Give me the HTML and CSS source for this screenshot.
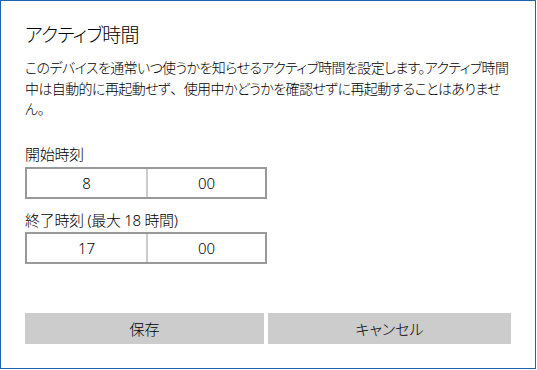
FILE: index.html
```html
<!DOCTYPE html>
<html lang="ja">
<head>
<meta charset="utf-8">
<link rel="stylesheet" href="styles.css">
</head>
<body>
<div class="window">
  <h1 class="title">アクティブ時間</h1>
  <p class="desc">このデバイスを通常いつ使うかを知らせるアクティブ時間を設定します。アクティブ時間<br>中は自動的に再起動せず<span class="punct">、</span>使用中かどうかを確認せずに再起動することはありませ<br>ん。</p>
  <div class="field">
    <div class="label">開始時刻</div>
    <div class="timebox">
      <div class="cell">8</div>
      <div class="cell">00</div>
    </div>
  </div>
  <div class="field">
    <div class="label">終了時刻 (最大 18 時間)</div>
    <div class="timebox">
      <div class="cell">17</div>
      <div class="cell">00</div>
    </div>
  </div>
  <div class="actions">
    <button class="btn">保存</button>
    <button class="btn">キャンセル</button>
  </div>
</div>
</body>
</html>
```

FILE: styles.css
```css
html, body {
  margin: 0;
  padding: 0;
  background: #ffffff;
}
body {
  font-family: "Noto Sans", "Noto Sans CJK JP", sans-serif;
  color: #000;
  font-feature-settings: "palt";
  font-weight: 300;
}
.window {
  box-sizing: border-box;
  width: 536px;
  height: 369px;
  border: 1px solid #1f62ad;
  padding: 19px 24px 0 24px;
  display: flex;
  flex-direction: column;
}
.title {
  margin: 0;
  font-size: 19px;
  letter-spacing: -0.8px;
  font-weight: 300;
  line-height: 30px;
}
.desc {
  margin: 8px 0 0 0;
  font-size: 14px;
  letter-spacing: -0.6px;
  line-height: 20.5px;
  white-space: nowrap;
}
.punct {
  font-feature-settings: normal;
}
.field {
  margin-top: 24px;
  display: flex;
  flex-direction: column;
  gap: 3px;
}
.field + .field {
  margin-top: 11px;
  gap: 2px;
}
.label {
  font-size: 15px;
  line-height: 20px;
  letter-spacing: -0.3px;
}
.timebox {
  box-sizing: border-box;
  width: 242px;
  height: 32px;
  border: 2px solid #999999;
  display: grid;
  grid-template-columns: 1fr 1fr;
}
.cell {
  display: flex;
  align-items: center;
  justify-content: center;
  font-size: 15px;
}
.cell + .cell {
  border-left: 2px solid #cccccc;
}
.actions {
  margin-top: 49px;
  display: grid;
  grid-template-columns: 239px 1fr;
  gap: 4px;
}
.btn {
  height: 31px;
  border: none;
  background: #cccccc;
  font-family: "Noto Sans", "Noto Sans CJK JP", sans-serif;
  font-feature-settings: "palt";
  font-weight: 300;
  font-size: 15px;
  color: #000;
  padding: 0;
}
```
